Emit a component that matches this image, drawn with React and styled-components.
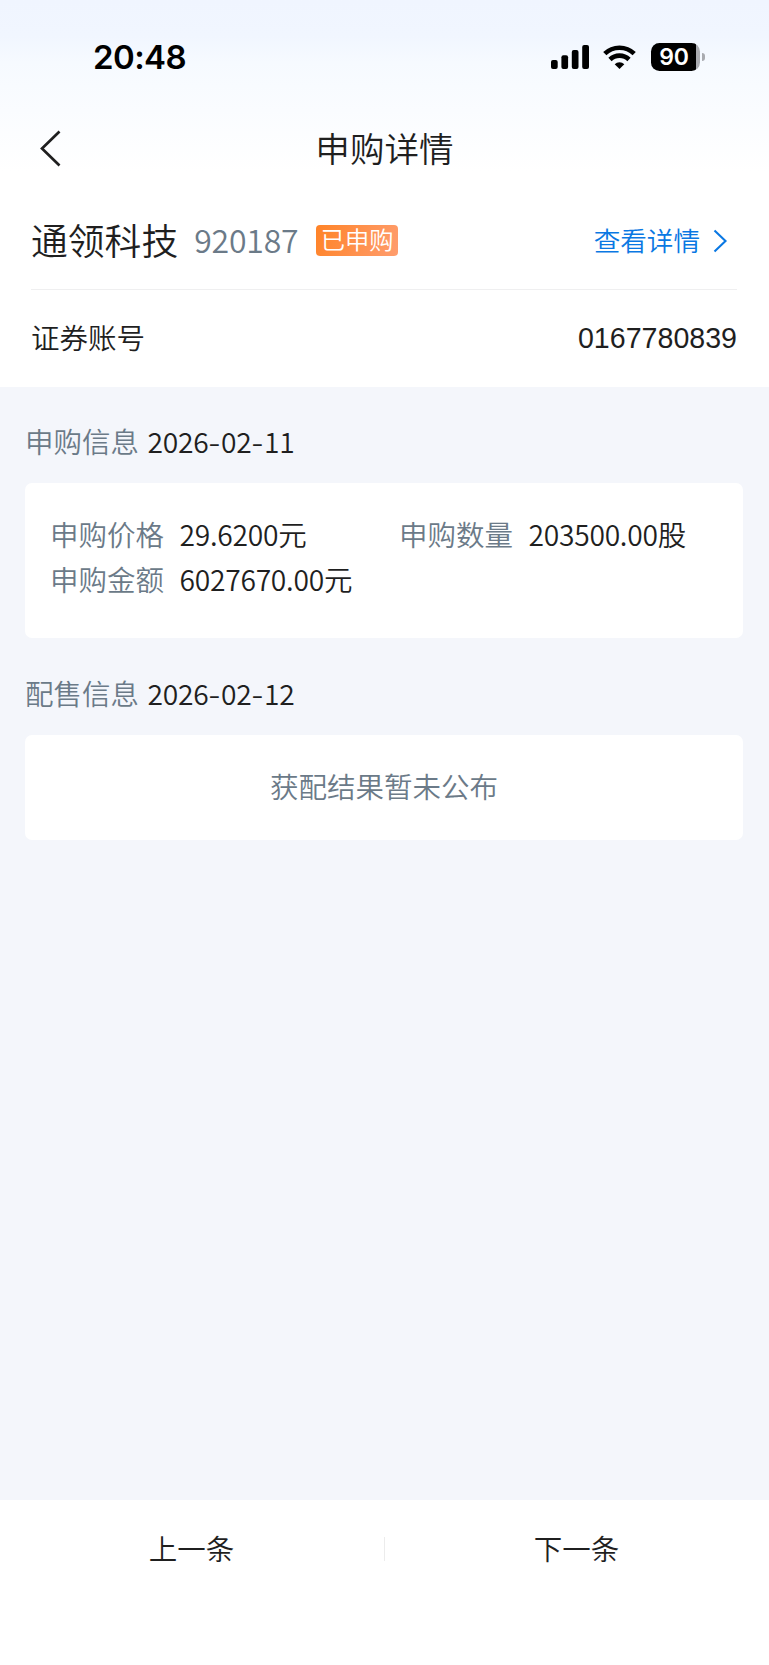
import React from 'react';
import styled, { createGlobalStyle } from 'styled-components';

const APPLY_INFO = [
  { label: '申购价格', value: '29.6200', unit: '元' },
  { label: '申购数量', value: '203500.00', unit: '股' },
  { label: '申购金额', value: '6027670.00', unit: '元' },
];

function DateText({ value }) {
  const [year, month, day] = value.split('-');

  return (
    <DateWrap>
      <Num>{year}</Num>
      <Dash>-</Dash>
      <Num>{month}</Num>
      <Dash>-</Dash>
      <Num>{day}</Num>
    </DateWrap>
  );
}

function StatusIcons() {
  return (
    <StatusIconWrap>
      <svg width="38" height="24" viewBox="0 0 38 24">
        <rect x="0" y="15" width="6.7" height="9" rx="2" />
        <rect x="10.4" y="10.3" width="6.7" height="13.7" rx="2" />
        <rect x="20.8" y="5" width="6.7" height="19" rx="2" />
        <rect x="31.2" y="0" width="6.8" height="24" rx="2" />
      </svg>
      <svg width="33" height="24" viewBox="0 0 33 24">
        <g fill="none" stroke="#000" strokeWidth="4.6">
          <path d="M1.8 8.7a21 21 0 0 1 29.4 0" />
          <path d="M7 14.5a13.5 13.5 0 0 1 19 0" />
        </g>
        <path d="M16.5 24l-4.8-4.8a6.8 6.8 0 0 1 9.6 0z" />
      </svg>
      <Battery>
        <BatteryBody>90</BatteryBody>
        <BatteryCap />
      </Battery>
    </StatusIconWrap>
  );
}

export default function App() {
  return (
    <>
      <GlobalStyle />
      <Page>
        <Header>
          <StatusBar>
            <Time>20:48</Time>
            <StatusIcons />
          </StatusBar>
          <NavBar>
            <BackButton aria-label="返回">
              <svg width="22" height="37" viewBox="0 0 22 37">
                <path d="M20.5 1.5L3 18.5l17.5 17" fill="none" stroke="#1f1f1f" strokeWidth="2.7" />
              </svg>
            </BackButton>
            <Title>申购详情</Title>
          </NavBar>
        </Header>

        <Summary>
          <StockRow>
            <StockName>通领科技</StockName>
            <StockCode>920187</StockCode>
            <Badge>已申购</Badge>
            <DetailLink>
              <DetailText>查看详情</DetailText>
              <svg width="15" height="24" viewBox="0 0 15 24">
                <path d="M1.5 1.5L12.5 12 1.5 22.5" fill="none" stroke="currentColor" strokeWidth="2.1" />
              </svg>
            </DetailLink>
          </StockRow>
          <AccountRow>
            <AccountLabel>证券账号</AccountLabel>
            <AccountNo>0167780839</AccountNo>
          </AccountRow>
        </Summary>

        <Content>
          <SectionTitle>
            <SectionName>申购信息</SectionName>
            <DateText value="2026-02-11" />
          </SectionTitle>
          <InfoCard>
            {APPLY_INFO.map((item) => (
              <InfoItem key={item.label}>
                <InfoLabel>{item.label}</InfoLabel>
                <InfoValue>
                  <Num>{item.value}</Num>
                  {item.unit}
                </InfoValue>
              </InfoItem>
            ))}
          </InfoCard>
          <SectionTitle>
            <SectionName>配售信息</SectionName>
            <DateText value="2026-02-12" />
          </SectionTitle>
          <EmptyCard>获配结果暂未公布</EmptyCard>
        </Content>

        <Footer>
          <FooterButton>上一条</FooterButton>
          <FooterLine />
          <FooterButton>下一条</FooterButton>
        </Footer>
      </Page>
    </>
  );
}

const GlobalStyle = createGlobalStyle`
  * {
    box-sizing: border-box;
  }
  body {
    margin: 0;
    background-color: #f4f6fb;
    font-family: 'Noto Sans CJK SC', sans-serif;
    font-weight: 350;
    color: #1f1f1f;
  }
  svg {
    display: block;
  }
`;
const Page = styled.div`
  display: flex;
  flex-direction: column;
  height: 1665px;
  font-size: 28.5px;
`;
const Header = styled.div`
  height: 197px;
  background: linear-gradient(#f0f5ff 0, #f1f6ff 36px, #f6faff 62px, #fafcff 110px, #fff 172px);
`;
const StatusBar = styled.div`
  display: flex;
  justify-content: space-between;
  align-items: center;
  height: 114px;
  padding: 0 64.5px 0 93px;
`;
const Time = styled.div`
  font-family: Inter, sans-serif;
  font-size: 33px;
  font-weight: 600;
  letter-spacing: -0.6px;
  color: #000;
`;
const StatusIconWrap = styled.div`
  display: flex;
  align-items: center;
  gap: 14.3px;
`;
const Battery = styled.div`
  display: flex;
  align-items: center;
  gap: 2px;
`;
const BatteryBody = styled.div`
  width: 49px;
  height: 27.4px;
  padding-right: 2px;
  border-radius: 8.5px;
  background: linear-gradient(90deg, #000 44.5px, #a9abb0 44.5px);
  font-family: Inter, sans-serif;
  font-size: 23px;
  font-weight: 600;
  line-height: 28px;
  letter-spacing: -0.3px;
  text-align: center;
  color: #fff;
`;
const BatteryCap = styled.div`
  width: 3px;
  height: 8px;
  border-radius: 0 4px 4px 0;
  background-color: #a9abb0;
`;
const NavBar = styled.div`
  display: grid;
  grid-template-columns: 100px 1fr 100px;
  align-items: center;
  height: 68px;
`;
const BackButton = styled.button`
  padding: 0 0 0 38.5px;
  border: none;
  background: none;
  cursor: pointer;
`;
const Title = styled.div`
  padding-bottom: 3px;
  font-size: 34.6px;
  line-height: 50px;
  text-align: center;
`;
const Summary = styled.div`
  height: 190px;
  padding: 0 32px 0 31px;
  background-color: #fff;
`;
const StockRow = styled.div`
  display: flex;
  align-items: center;
  height: 93px;
  padding-bottom: 5px;
  border-bottom: 1px solid #efeff0;
  line-height: 50px;
`;
const StockName = styled.div`
  padding-bottom: 4px;
  font-size: 36.8px;
`;
const StockCode = styled.div`
  width: 106px;
  margin-left: 16px;
  padding-bottom: 4px;
  font-size: 32px;
  letter-spacing: -0.2px;
  color: #6b7a88;
`;
const Badge = styled.div`
  width: 82px;
  height: 31px;
  margin-left: 16px;
  border-radius: 4px;
  background: linear-gradient(110deg, #ff8327, #ff9d6e);
  font-size: 24.3px;
  line-height: 27px;
  text-align: center;
  color: #fff;
`;
const DetailLink = styled.div`
  display: flex;
  align-items: center;
  gap: 13px;
  margin-left: auto;
  padding-right: 9px;
  font-size: 26.6px;
  color: #0a78e3;
`;
const DetailText = styled.span`
  padding-bottom: 2px;
`;
const AccountRow = styled.div`
  display: flex;
  justify-content: space-between;
  align-items: center;
  height: 97px;
`;
const AccountLabel = styled.span`
  padding-bottom: 4px;
`;
const AccountNo = styled.span`
  font-family: 'Liberation Sans', Arial, sans-serif;
  font-size: 28.6px;
`;
const Content = styled.div`
  flex: 1;
  padding: 15px 26px 0 25px;
`;
const SectionTitle = styled.div`
  display: flex;
  align-items: center;
  height: 81px;
  padding-bottom: 4px;
  color: #6b7a88;
`;
const SectionName = styled.span`
  line-height: 41px;
`;
const DateWrap = styled.span`
  display: flex;
  align-items: center;
  margin-left: 8.5px;
  line-height: 41px;
  color: #1f1f1f;
`;
const Num = styled.span`
  font-size: 28.2px;
  letter-spacing: -0.25px;
`;
const Dash = styled.span`
  width: 12.6px;
  text-align: center;
  transform: scaleX(1.2);
`;
const InfoCard = styled.div`
  display: grid;
  grid-template-columns: 349px 1fr;
  grid-auto-rows: 45px;
  height: 155px;
  margin-bottom: 16px;
  padding: 28px 25px;
  border-radius: 7px;
  background-color: #fff;
`;
const InfoItem = styled.div`
  display: flex;
  align-items: center;
  padding-bottom: 1px;
  line-height: 45px;
`;
const InfoLabel = styled.span`
  color: #6b7a88;
`;
const InfoValue = styled.span`
  margin-left: 15.5px;
`;
const EmptyCard = styled.div`
  height: 105px;
  border-radius: 7px;
  background-color: #fff;
  line-height: 101px;
  text-align: center;
  color: #6b7a88;
`;
const Footer = styled.div`
  display: flex;
  align-items: center;
  height: 165px;
  padding-bottom: 67px;
  background-color: #fff;
`;
const FooterButton = styled.div`
  flex: 1;
  padding: 0 1px 4px 0;
  text-align: center;
  cursor: pointer;
`;
const FooterLine = styled.div`
  width: 1px;
  height: 24px;
  background-color: #ececec;
`;
